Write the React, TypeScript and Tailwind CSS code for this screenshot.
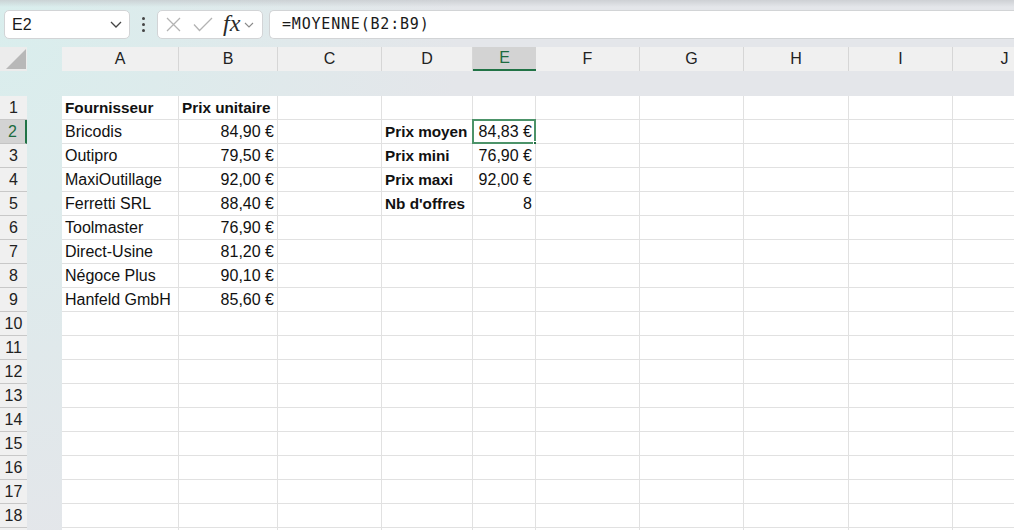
import React from "react";

type Cell = { t: string; b?: boolean; r?: boolean };

const cols = [
  { l: "A", w: "w-[117px]" },
  { l: "B", w: "w-[99px]" },
  { l: "C", w: "w-[104px]" },
  { l: "D", w: "w-[91px]" },
  { l: "E", w: "w-[63px]" },
  { l: "F", w: "w-[104px]" },
  { l: "G", w: "w-[104px]" },
  { l: "H", w: "w-[105px]" },
  { l: "I", w: "w-[104px]" },
  { l: "J", w: "w-[104px]" },
];

const data: Record<number, Record<number, Cell>> = {
  1: { 0: { t: "Fournisseur", b: true }, 1: { t: "Prix unitaire", b: true } },
  2: { 0: { t: "Bricodis" }, 1: { t: "84,90 €", r: true }, 3: { t: "Prix moyen", b: true }, 4: { t: "84,83 €", r: true } },
  3: { 0: { t: "Outipro" }, 1: { t: "79,50 €", r: true }, 3: { t: "Prix mini", b: true }, 4: { t: "76,90 €", r: true } },
  4: { 0: { t: "MaxiOutillage" }, 1: { t: "92,00 €", r: true }, 3: { t: "Prix maxi", b: true }, 4: { t: "92,00 €", r: true } },
  5: { 0: { t: "Ferretti SRL" }, 1: { t: "88,40 €", r: true }, 3: { t: "Nb d'offres", b: true }, 4: { t: "8", r: true } },
  6: { 0: { t: "Toolmaster" }, 1: { t: "76,90 €", r: true } },
  7: { 0: { t: "Direct-Usine" }, 1: { t: "81,20 €", r: true } },
  8: { 0: { t: "Négoce Plus" }, 1: { t: "90,10 €", r: true } },
  9: { 0: { t: "Hanfeld GmbH" }, 1: { t: "85,60 €", r: true } },
};

const rows = Array.from({ length: 19 }, (_, i) => i + 1);

export default function App() {
  return (
    <div
      className="w-[1014px] h-[530px] overflow-hidden bg-[radial-gradient(ellipse_460px_560px_at_0%_0%,#d9eeed,#e4e6ea)] text-[#111]"
      style={{ fontFamily: '"Liberation Sans", Arial, sans-serif' }}
    >
      {/* Toolbar */}
      <div className="relative h-[47px] flex items-start pt-[10px] pl-[4px]">
        <div className="absolute left-0 top-0 right-0 h-[7px] bg-gradient-to-b from-[#c4c7cb] to-transparent opacity-70" />
        <div className="relative shrink-0 w-[126px] h-[29px] rounded-[5px] border border-[#d2d4d6] bg-white flex items-center justify-between pl-[7px] pr-[7px]">
          <span className="text-[16px] text-[#1a1a1a]">E2</span>
          <svg width="12" height="7" viewBox="0 0 12 7" fill="none">
            <path d="M1 1L6 6L11 1" stroke="#444" strokeWidth="1.3" />
          </svg>
        </div>
        <div className="shrink-0 w-[27px] h-[29px] flex flex-col items-center justify-center gap-[3px]">
          <span className="w-[3px] h-[3px] rounded-full bg-[#444]" />
          <span className="w-[3px] h-[3px] rounded-full bg-[#444]" />
          <span className="w-[3px] h-[3px] rounded-full bg-[#444]" />
        </div>
        <div className="relative shrink-0 w-[106px] h-[29px] rounded-[5px] border border-[#d2d4d6] bg-white flex items-center pl-[8px]">
          <svg width="15" height="15" viewBox="0 0 15 15" fill="none">
            <path d="M1 1L14 14M14 1L1 14" stroke="#b3b3b3" strokeWidth="1.3" />
          </svg>
          <svg className="ml-[12px]" width="20" height="15" viewBox="0 0 20 15" fill="none">
            <path d="M1 7.5L6.5 13.5L19 1" stroke="#b3b3b3" strokeWidth="1.3" />
          </svg>
          <span
            className="ml-[10px] text-[24px] italic leading-none text-[#2a2a2a] -mt-[3px]"
            style={{ fontFamily: '"Liberation Serif", "Times New Roman", serif' }}
          >
            fx
          </span>
          <svg className="ml-[4px]" width="10" height="6" viewBox="0 0 10 6" fill="none">
            <path d="M1 1L5 5L9 1" stroke="#8a8a8a" strokeWidth="1.1" />
          </svg>
        </div>
        <div className="ml-[6px] flex-1 h-[29px] rounded-l-[5px] border border-r-0 border-[#d2d4d6] bg-white flex items-center pl-[12px]">
          <span
            className="text-[15px] tracking-[0.8px] text-[#1a1a1a]"
            style={{ fontFamily: '"DejaVu Sans Mono", monospace' }}
          >
            =MOYENNE(B2:B9)
          </span>
        </div>
      </div>

      {/* Column headers */}
      <div className="flex h-[24px]">
        <div className="shrink-0 w-[27px] h-[24px] bg-[#ececec] flex items-end justify-end pr-[1px] pb-[2px]">
          <svg width="20" height="20" viewBox="0 0 20 20">
            <path d="M0 20L20 0V20Z" fill="#b8b8b8" />
          </svg>
        </div>
        <div className="w-[35px] shrink-0" />
        {cols.map((c) =>
          c.l === "E" ? (
            <div
              key={c.l}
              className={`${c.w} shrink-0 h-[24px] bg-[#d3d3d3] border-b-2 border-[#217346] flex items-center justify-center text-[16px] text-[#1d6b40]`}
            >
              {c.l}
            </div>
          ) : (
            <div
              key={c.l}
              className={`${c.w} shrink-0 h-[24px] bg-[#f0f0f0] border-r border-[#d6d6d6] flex items-center justify-center text-[16px] text-[#222]`}
            >
              {c.l}
            </div>
          )
        )}
      </div>

      {/* Empty band */}
      <div className="h-[25px]" />

      {/* Rows */}
      {rows.map((r) => (
        <div key={r} className="flex h-[24px]">
          {r === 2 ? (
            <div className="w-[27px] shrink-0 h-[24px] bg-[#d3d3d3] border-r-2 border-b border-r-[#217346] border-b-[#c4c4c4] flex items-center justify-center text-[16px] text-[#1d6b40]">
              {r}
            </div>
          ) : (
            <div className="w-[27px] shrink-0 h-[24px] bg-[#f0f0f0] border-b border-[#c8c8c8] flex items-center justify-center text-[16px] text-[#222]">
              {r < 19 ? r : ""}
            </div>
          )}
          <div className="w-[35px] shrink-0" />
          {cols.map((c, ci) => {
            const cell = data[r]?.[ci];
            const sel = r === 2 && ci === 4;
            return (
              <div
                key={c.l}
                className={`${c.w} shrink-0 relative h-[24px] bg-white border-r border-b border-[#e1e1e1] px-[3px] leading-[24px] whitespace-nowrap ${
                  cell?.r ? "text-right" : "text-left"
                } ${cell?.b ? "font-bold text-[15.3px]" : "text-[16px]"}`}
              >
                {cell?.t}
                {sel && (
                  <>
                    <div className="absolute -left-[1px] -top-[1px] -right-[1px] -bottom-[1px] border-2 border-[#4c9369] pointer-events-none" />
                    <div className="absolute -right-[3px] -bottom-[3px] w-[5px] h-[5px] bg-[#1e6b40] border border-white pointer-events-none" />
                  </>
                )}
              </div>
            );
          })}
        </div>
      ))}
    </div>
  );
}
